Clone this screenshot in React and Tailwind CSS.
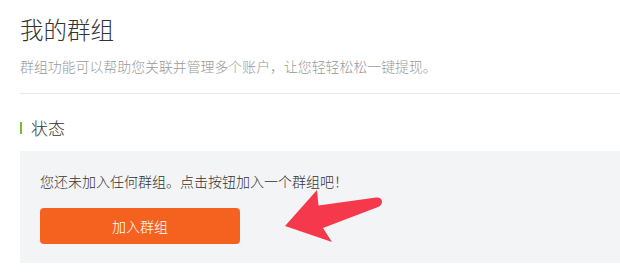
import React from 'react';

const font = { fontFamily: '"Noto Sans CJK SC", "Noto Sans", sans-serif' };

const Arrow = () => (
  <svg className="absolute left-0 top-0 pointer-events-none" width="620" height="276" viewBox="0 0 620 276">
    <path
      d="M285 226 L317 190 L318.5 205.5 L376 197.5 Q382 197 382 202 Q381.5 205.5 378 207 L323 228 L332 242 Z"
      fill="#f5384b"
    />
  </svg>
);

export default function App() {
  return (
    <div className="relative w-[620px] h-[276px] bg-white overflow-hidden font-light" style={font}>
      <div className="pl-5">
        <h1 className="mt-[13px] text-[23.5px] leading-[32px] text-[#333] font-light">我的群组</h1>
        <p className="mt-[11px] text-[13.9px] leading-[20px] text-[#999]">
          群组功能可以帮助您关联并管理多个账户，让您轻轻松松一键提现。
        </p>
        <div className="mt-[17px] border-t border-[#e8e8e8]" />
        <div className="mt-[22px] flex items-center h-6">
          <span className="w-[2px] h-[12px] bg-[#7cbd2f]" />
          <span className="ml-[9px] text-[17px] leading-6 text-[#333]">状态</span>
        </div>
        <div className="mt-[11px] h-[112px] bg-[#f3f4f6] pl-5 pt-5">
          <p className="text-[14px] leading-[20px] text-[#333]">
            您还未加入任何群组。点击按钮加入一个群组吧！
          </p>
          <button className="mt-[17px] w-[200px] h-9 rounded-[4px] bg-[#f5621f] text-white text-[14px] flex items-center justify-center">
            加入群组
          </button>
        </div>
      </div>
      <Arrow />
    </div>
  );
}
